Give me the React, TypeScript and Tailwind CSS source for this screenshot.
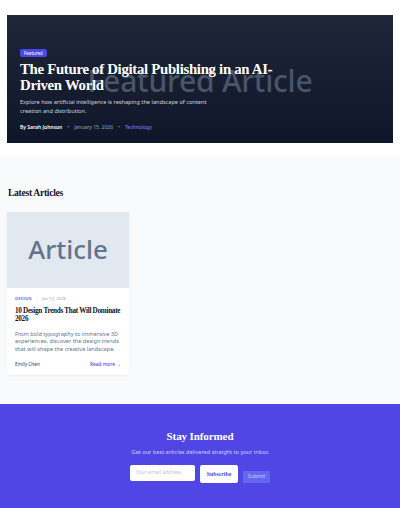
import React from "react";

export default function App() {
  return (
    <div className="w-[400px] min-h-[508px] bg-white font-['Noto_Sans',sans-serif] antialiased">
      {/* Hero */}
      <section className="px-[7px] pt-[15px] pb-[14px]">
        <div className="relative h-[128px] overflow-hidden bg-gradient-to-b from-[#1e2638] to-[#0f1629]">
          <div className="absolute inset-0 flex items-center justify-center pt-[3px] text-[30px] font-medium tracking-[-0.2px] text-[#4a5468]">
            Featured Article
          </div>
          <div className="relative flex h-full flex-col justify-end px-[13px] pb-[12px]">
            <div className="flex">
              <span className="rounded-[2px] bg-[#4f46e5] px-[4px] text-[4.5px] leading-[8px] text-white">
                Featured
              </span>
            </div>
            <h1 className="mt-[4px] w-[262px] font-['Liberation_Serif',serif] text-[14.8px] font-bold leading-[16px] tracking-[-0.3px] text-white">
              The Future of Digital Publishing in an AI-Driven World
            </h1>
            <p className="mt-[5px] w-[200px] text-[5.6px] leading-[9px] text-[#cbd5e1]">
              Explore how artificial intelligence is reshaping the landscape of content creation and distribution.
            </p>
            <div className="mt-[7px] flex items-center gap-[5px] text-[5px] leading-[8px]">
              <span className="font-semibold text-white">By Sarah Johnson</span>
              <span className="text-[#94a3b8]">•</span>
              <span className="text-[#94a3b8]">January 15, 2026</span>
              <span className="text-[#94a3b8]">•</span>
              <span className="text-[#818cf8]">Technology</span>
            </div>
          </div>
        </div>
      </section>

      {/* Latest Articles */}
      <section className="bg-[#f8fafc] px-[7px] pt-[30px] pb-[29px]">
        <h2 className="pl-[1px] font-['Liberation_Serif',serif] text-[9.6px] font-bold leading-[12px] tracking-[-0.3px] text-[#0f172a]">
          Latest Articles
        </h2>
        <div className="mt-[12.5px] w-[122px] overflow-hidden bg-white shadow-[0_1px_2px_rgba(15,23,42,0.06)]">
          <div className="flex h-[76px] items-center justify-center bg-[#e2e8f0] text-[26px] font-medium text-[#64748b]">
            Article
          </div>
          <div className="px-[8px] pt-[8px] pb-[8px]">
            <div className="flex items-center gap-[4px] text-[4.2px] leading-[6px]">
              <span className="font-semibold uppercase tracking-[0.2px] text-[#6366f1]">Design</span>
              <span className="text-[#d1d5db]">|</span>
              <span className="text-[#94a3b8]">Jan 12, 2026</span>
            </div>
            <h3 className="mt-[5px] mr-[-4px] font-['Liberation_Serif',serif] text-[7.2px] font-bold leading-[8.5px] tracking-[-0.3px] text-[#0f172a]">
              10 Design Trends That Will Dominate 2026
            </h3>
            <p className="mt-[7px] text-[5.6px] leading-[7.5px] text-[#64748b]">
              From bold typography to immersive 3D experiences, discover the design trends that will shape the creative landscape.
            </p>
            <div className="mt-[8px] flex items-center justify-between text-[4.8px] leading-[6px]">
              <span className="text-[#334155]">Emily Chen</span>
              <span className="font-medium text-[#4f46e5]">Read more →</span>
            </div>
          </div>
        </div>
      </section>

      {/* Newsletter */}
      <section className="h-[105px] bg-[#4f46e5] pt-[25px] text-center">
        <h2 className="font-['Liberation_Serif',serif] text-[11px] font-bold leading-[14px] tracking-[-0.1px] text-white">
          Stay Informed
        </h2>
        <p className="mt-[5px] text-[5.6px] leading-[8px] text-[#c7d2fe]">
          Get our best articles delivered straight to your inbox
        </p>
        <div className="mt-[9px] flex items-start justify-center gap-[5px]">
          <div className="flex h-[16px] w-[65px] items-center rounded-[2px] bg-white px-[6px] text-left text-[5px] text-[#c0c4d0]">
            Your email address
          </div>
          <div className="flex h-[18px] w-[38px] items-center justify-center rounded-[2px] bg-white font-['Liberation_Serif',serif] text-[5.8px] font-bold text-[#4f46e5]">
            Subscribe
          </div>
          <div className="mt-[6px] flex h-[12px] w-[27px] items-center justify-center bg-[#6366f1] text-[5.2px] text-[#c7d2fe]">
            Submit
          </div>
        </div>
      </section>
    </div>
  );
}
